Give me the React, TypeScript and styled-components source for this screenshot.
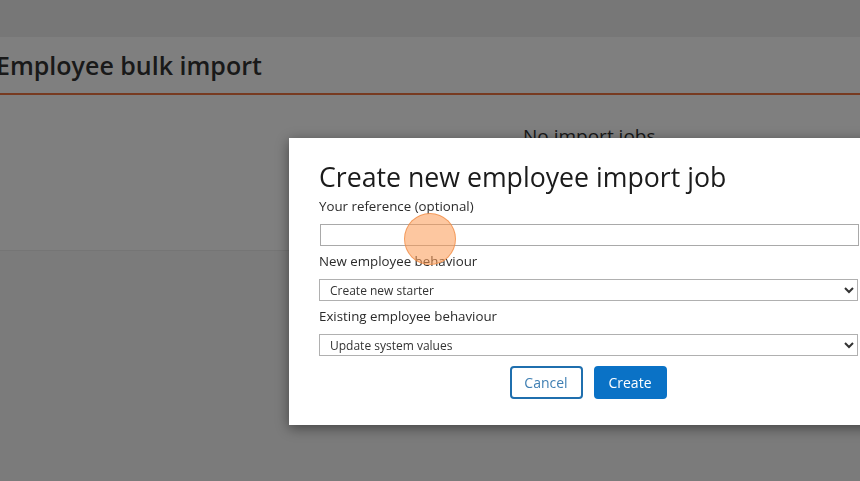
import styled, { createGlobalStyle } from "styled-components";

const GlobalStyle = createGlobalStyle`
  html, body {
    margin: 0;
    padding: 0;
    width: 860px;
    height: 481px;
    overflow: hidden;
    background: #f6f6f6;
    font-family: "Open Sans", "Noto Sans", sans-serif;
  }
`;

const Page = styled.div`
  height: 481px;
  position: relative;
`;

const TopStrip = styled.div`
  height: 37px;
  background: #eeeeee;
`;

const Card = styled.section`
  margin-left: -20px;
  background: #ffffff;
  height: 213px;
  border-bottom: 1px solid #eaeaea;
`;

const CardHeader = styled.header`
  height: 56px;
  display: flex;
  align-items: center;
  padding-left: 16px;
  border-bottom: 2px solid #ef7440;
`;

const CardTitle = styled.h1`
  margin: 0;
  font-size: 25px;
  font-weight: 600;
  color: #333;
`;

const EmptyText = styled.div`
  padding-top: 28px;
  padding-left: 543px;
  font-size: 19px;
  color: #333;
`;

const Overlay = styled.div`
  position: fixed;
  inset: 0;
  background: rgba(0, 0, 0, 0.5);
`;

const Modal = styled.div`
  position: absolute;
  left: 289px;
  top: 138px;
  width: 538px;
  padding: 21px 30px 26px;
  background: #ffffff;
  box-shadow: 0 3px 12px rgba(0, 0, 0, 0.45);
  display: flex;
  flex-direction: column;
`;

const ModalTitle = styled.h2`
  margin: 0 0 2px;
  font-size: 26.7px;
  font-weight: 400;
  line-height: 36px;
  color: #1b1b1b;
`;

const Label = styled.label`
  display: block;
  font-size: 13.3px;
  line-height: 19px;
  color: #2b2b2b;
  margin-bottom: 8px;
`;

const Field = styled.div`
  margin-bottom: 6px;
`;

const TextInput = styled.input`
  display: block;
  box-sizing: border-box;
  width: 539px;
  margin-left: 1px;
  height: 22px;
  border: 1px solid #a9a9a9;
  outline: none;
  padding: 0 4px;
  font-family: inherit;
`;

const Select = styled.select`
  display: block;
  box-sizing: border-box;
  width: 539px;
  height: 22px;
  border: 1px solid #b0b0b0;
  border-radius: 0;
  background: #fff;
  font-family: inherit;
  font-size: 12px;
  color: #333;
  padding: 0 6px;
`;

const Buttons = styled.div`
  display: flex;
  justify-content: center;
  gap: 11px;
  margin-top: 4px;
`;

const Button = styled.button<{ $primary?: boolean }>`
  box-sizing: border-box;
  width: 73px;
  height: 33px;
  border-radius: 4px;
  font-family: inherit;
  font-size: 14px;
  border: 2px solid ${(p) => (p.$primary ? "#0a72c6" : "#1f6fae")};
  background: ${(p) => (p.$primary ? "#0a72c6" : "#ffffff")};
  color: ${(p) => (p.$primary ? "#ffffff" : "#3f7fb3")};
  cursor: pointer;
`;

const ClickMarker = styled.div`
  position: absolute;
  left: 404px;
  top: 213px;
  width: 50px;
  height: 50px;
  border-radius: 50%;
  background: rgba(251, 153, 82, 0.55);
  border: 1.5px solid rgba(240, 140, 70, 0.75);
  pointer-events: none;
`;

export default function App() {
  return (
    <Page>
      <GlobalStyle />
      <TopStrip />
      <Card>
        <CardHeader>
          <CardTitle>Employee bulk import</CardTitle>
        </CardHeader>
        <EmptyText>No import jobs</EmptyText>
      </Card>
      <Overlay />
      <Modal>
        <ModalTitle>Create new employee import job</ModalTitle>
        <Field>
          <Label>Your reference (optional)</Label>
          <TextInput type="text" />
        </Field>
        <Field>
          <Label>New employee behaviour</Label>
          <Select defaultValue="new">
            <option value="new">Create new starter</option>
          </Select>
        </Field>
        <Field>
          <Label>Existing employee behaviour</Label>
          <Select defaultValue="update">
            <option value="update">Update system values</option>
          </Select>
        </Field>
        <Buttons>
          <Button>Cancel</Button>
          <Button $primary>Create</Button>
        </Buttons>
      </Modal>
      <ClickMarker />
    </Page>
  );
}
